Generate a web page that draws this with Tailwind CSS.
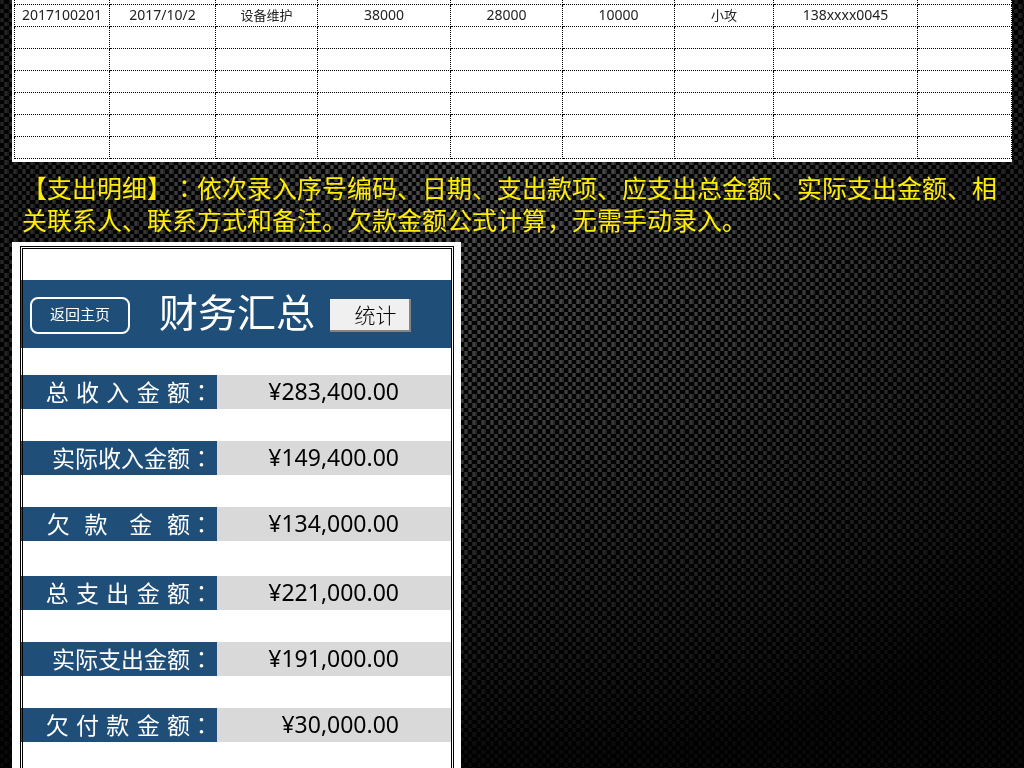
<!DOCTYPE html>
<html lang="zh-CN">
<head>
    <meta charset="UTF-8">
    <meta name="viewport" content="width=device-width, initial-scale=1.0">
    <title>财务汇总</title>
    <script src="https://cdn.jsdelivr.net/npm/@tailwindcss/browser@4"></script>
</head>
<body class="bg-black font-['Noto_Sans','Noto_Sans_CJK_SC',sans-serif] [text-spacing-trim:space-all]">
    <!-- Carbon fibre backdrop -->
    <svg class="fixed inset-0 w-full h-full -z-10" aria-hidden="true">
        <defs>
            <pattern id="weave" width="26" height="26" patternUnits="userSpaceOnUse">
                <rect width="26" height="26" fill="#050505"/>
                <path fill="#363636" d="M0 0h4v4h-4zM9 0h4v4h-4zM18 0h4v4h-4zM4 4h5v5h-5zM13 4h5v5h-5zM22 4h4v5h-4zM0 9h4v4h-4zM9 9h4v4h-4zM18 9h4v4h-4zM4 13h5v5h-5zM13 13h5v5h-5zM22 13h4v5h-4zM0 18h4v4h-4zM9 18h4v4h-4zM18 18h4v4h-4zM4 22h5v4h-5zM13 22h5v4h-5zM22 22h4v4h-4z"/>
                <path fill="#505050" d="M1 0h2v4h-2zM10 0h2v4h-2zM19 0h2v4h-2zM5 4h2v5h-2zM14 4h2v5h-2zM23 4h2v5h-2zM1 9h2v4h-2zM10 9h2v4h-2zM19 9h2v4h-2zM5 13h2v5h-2zM14 13h2v5h-2zM23 13h2v5h-2zM1 18h2v4h-2zM10 18h2v4h-2zM19 18h2v4h-2zM5 22h2v4h-2zM14 22h2v4h-2zM23 22h2v4h-2z"/>
            </pattern>
            <radialGradient id="shade" cx="0.48" cy="0.25" r="0.75">
                <stop offset="0" stop-color="#000" stop-opacity="0"/>
                <stop offset="0.4" stop-color="#000" stop-opacity="0.25"/>
                <stop offset="1" stop-color="#000" stop-opacity="0.88"/>
            </radialGradient>
        </defs>
        <rect width="100%" height="100%" fill="url(#weave)"/>
        <rect width="100%" height="100%" fill="url(#shade)"/>
    </svg>

    <div class="min-h-screen flex flex-col px-3">
        <!-- Expense sheet -->
        <div class="bg-white pl-0.5 pb-[3px]">
            <table class="w-full table-fixed border-collapse text-sm leading-5 text-center text-[#222]">
                <colgroup>
                    <col class="w-[95px]"><col class="w-[106px]"><col class="w-[102px]"><col class="w-[133px]"><col class="w-[112px]"><col class="w-[112px]"><col class="w-[99px]"><col class="w-[144px]"><col>
                </colgroup>
                <tbody id="rows">
                    <tr class="h-1 [&>td]:border-t-0"><td></td><td></td><td></td><td></td><td></td><td></td><td></td><td></td><td></td></tr>
                    <tr class="h-[22px]">
                        <td>2017100201</td>
                        <td>2017/10/2</td>
                        <td class="text-[13px]">设备维护</td>
                        <td>38000</td>
                        <td>28000</td>
                        <td>10000</td>
                        <td class="text-[13px]">小攻</td>
                        <td>138xxxx0045</td>
                        <td></td>
                    </tr>
                </tbody>
            </table>
        </div>

        <!-- Description -->
        <p class="pt-[9px] pb-1.5 pl-[10px] text-[25px] leading-8 text-[#ffee00]">【支出明细】<span lang="ja" class="font-['Noto_Sans_CJK_JP']">：</span>依次录入序号编码、日期、支出款项、应支出总金额、实际支出金额、相关联系人、联系方式和备注。欠款金额公式计算，无需手动录入。</p>

        <!-- Summary panel -->
        <main class="relative flex-1 w-[449px] bg-white px-2 pt-[38px]">
            <header class="flex items-center h-[68px] bg-[#1f4e79] mx-px pl-[9px]">
                <button class="w-[100px] h-[37px] mt-1 pb-0.5 border-2 border-white rounded-lg text-white text-[15px]">返回主页</button>
                <h1 class="ml-[29px] text-[39px] leading-[64px] pb-1 text-white">财务汇总</h1>
                <button class="ml-[15px] mt-1 w-[81px] h-[33px] pl-3 bg-[#f0f0f0] border-r-2 border-b-2 border-[#858585] text-[21px] leading-[30px] font-light text-black">统计</button>
            </header>
            <dl id="income" class="flex flex-col gap-8 mt-[27px] mx-px"></dl>
            <dl id="expense" class="flex flex-col gap-8 mt-[35px] mx-px"></dl>
            <div class="absolute top-1 left-2 right-[7px] bottom-0 border-3 border-b-0 border-double border-black pointer-events-none"></div>
        </main>
    </div>

    <script>
        const income = [
            ['总 收 入 金 额', '¥283,400.00'],
            ['实际收入金额', '¥149,400.00'],
            ['欠  款   金  额', '¥134,000.00']
        ];
        const expense = [
            ['总 支 出 金 额', '¥221,000.00'],
            ['实际支出金额', '¥191,000.00'],
            ['欠 付 款 金 额', '¥30,000.00']
        ];

        // Function to fill one group of totals
        function fillTotals(id, items) {
            document.getElementById(id).innerHTML = items.map(([label, value]) => `
                <div class="flex h-[34px] text-[23px] leading-8 text-right">
                    <dt class="w-[196px] pr-1 bg-[#1f4e79] text-white whitespace-pre font-['DejaVu_Sans','Noto_Sans_CJK_SC']">${label}<span lang="ja" class="font-['Noto_Sans_CJK_JP']">：</span></dt>
                    <dd class="flex-1 pr-[53px] bg-[#d9d9d9] text-black">${value}</dd>
                </div>`).join('');
        }

        // Empty rows below the last record
        const rows = document.getElementById('rows');
        for (let i = 0; i < 6; i++) {
            const tr = document.createElement('tr');
            tr.className = 'h-[22px]';
            tr.innerHTML = '<td></td>'.repeat(9);
            rows.appendChild(tr);
        }
        rows.querySelectorAll('td').forEach(td => {
            td.className += ' p-0 border border-dotted border-black';
        });

        fillTotals('income', income);
        fillTotals('expense', expense);
    </script>
</body>
</html>
